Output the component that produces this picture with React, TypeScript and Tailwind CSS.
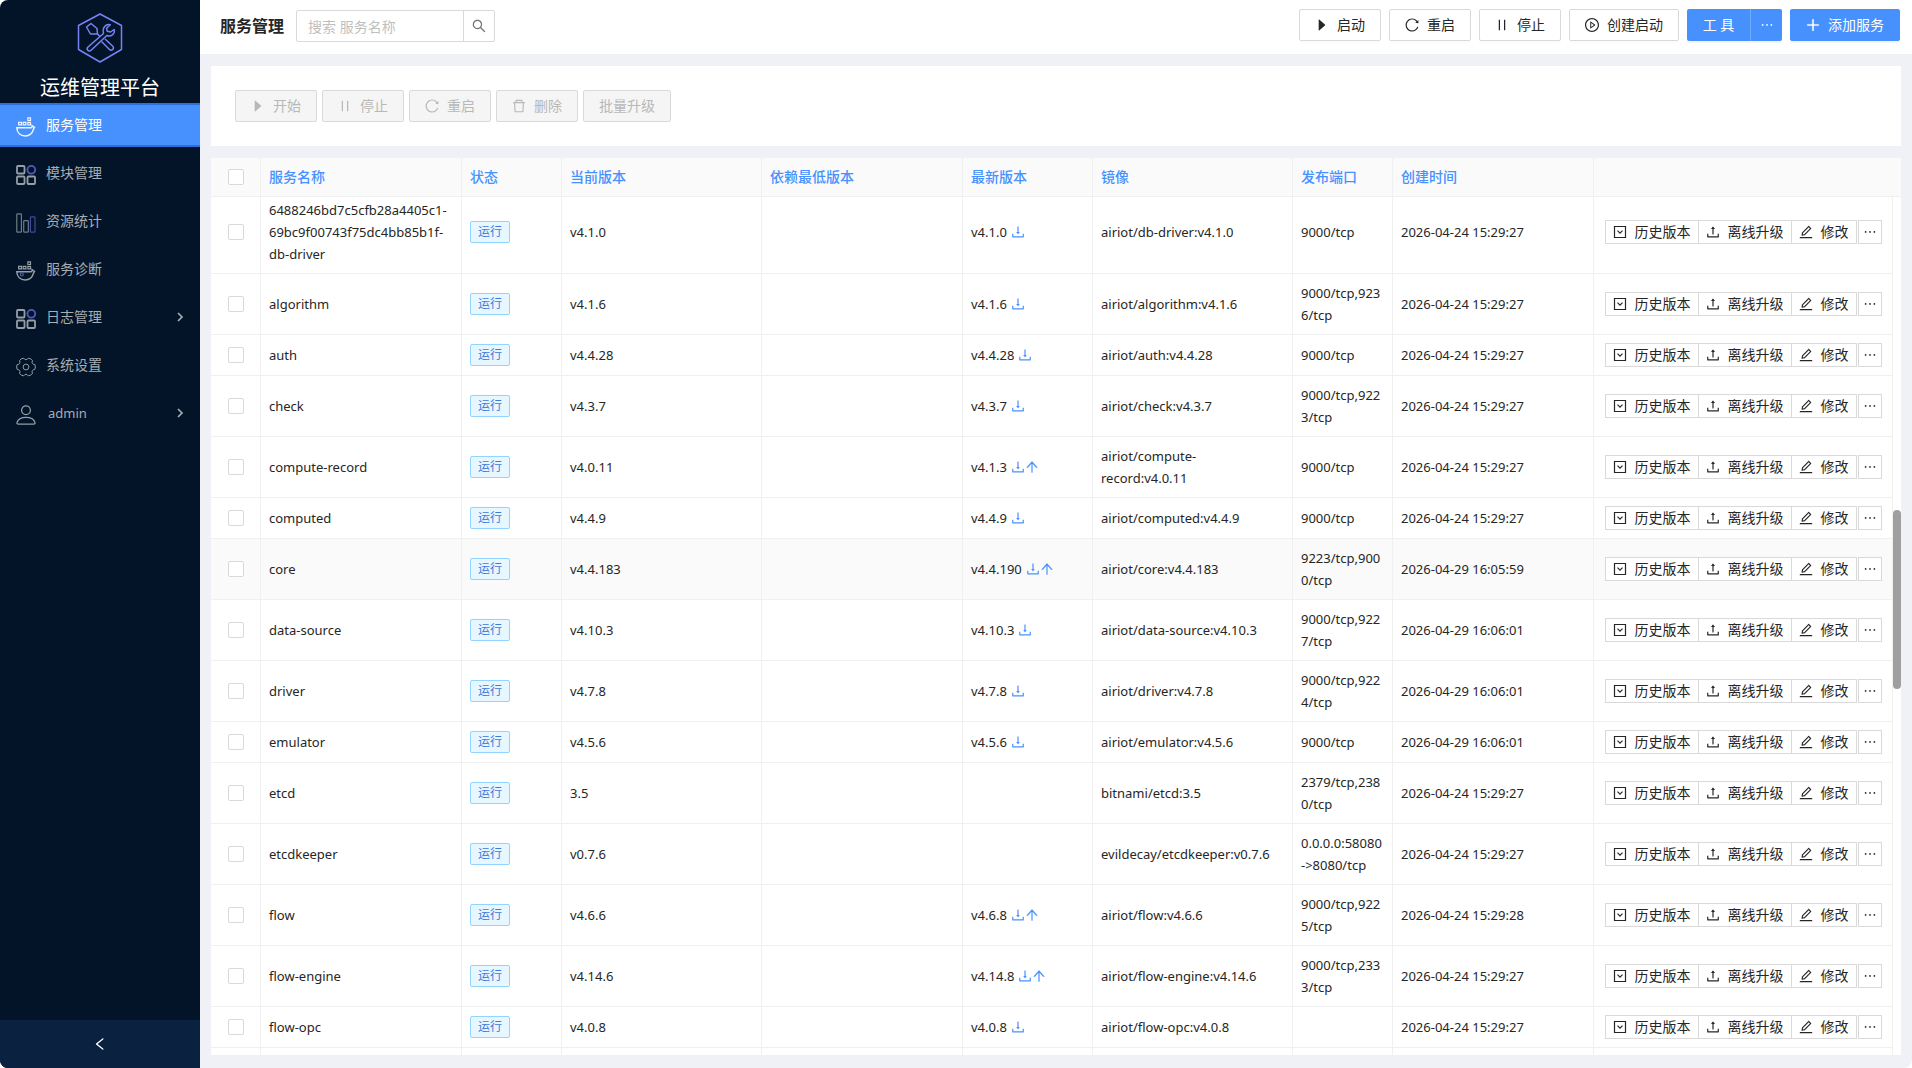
import React from 'react';
import {
  AiFillCaretRight,
  AiOutlineArrowUp,
  AiOutlineDelete,
  AiOutlineDownload,
  AiOutlineEdit,
  AiOutlineEllipsis,
  AiOutlineLeft,
  AiOutlinePause,
  AiOutlinePlayCircle,
  AiOutlinePlus,
  AiOutlineReload,
  AiOutlineSearch,
  AiOutlineUpload,
} from 'react-icons/ai';

type Service = {
  name: string;
  version: string;
  latest?: string;
  upgradable?: boolean;
  image: string;
  ports: string;
  created: string;
  hovered?: boolean;
};

const services: Service[] = [
  { name: '6488246bd7c5cfb28a4405c1-69bc9f00743f75dc4bb85b1f-db-driver', version: 'v4.1.0', latest: 'v4.1.0', image: 'airiot/db-driver:v4.1.0', ports: '9000/tcp', created: '2026-04-24 15:29:27' },
  { name: 'algorithm', version: 'v4.1.6', latest: 'v4.1.6', image: 'airiot/algorithm:v4.1.6', ports: '9000/tcp,9236/tcp', created: '2026-04-24 15:29:27' },
  { name: 'auth', version: 'v4.4.28', latest: 'v4.4.28', image: 'airiot/auth:v4.4.28', ports: '9000/tcp', created: '2026-04-24 15:29:27' },
  { name: 'check', version: 'v4.3.7', latest: 'v4.3.7', image: 'airiot/check:v4.3.7', ports: '9000/tcp,9223/tcp', created: '2026-04-24 15:29:27' },
  { name: 'compute-record', version: 'v4.0.11', latest: 'v4.1.3', upgradable: true, image: 'airiot/compute-record:v4.0.11', ports: '9000/tcp', created: '2026-04-24 15:29:27' },
  { name: 'computed', version: 'v4.4.9', latest: 'v4.4.9', image: 'airiot/computed:v4.4.9', ports: '9000/tcp', created: '2026-04-24 15:29:27' },
  { name: 'core', version: 'v4.4.183', latest: 'v4.4.190', upgradable: true, image: 'airiot/core:v4.4.183', ports: '9223/tcp,9000/tcp', created: '2026-04-29 16:05:59', hovered: true },
  { name: 'data-source', version: 'v4.10.3', latest: 'v4.10.3', image: 'airiot/data-source:v4.10.3', ports: '9000/tcp,9227/tcp', created: '2026-04-29 16:06:01' },
  { name: 'driver', version: 'v4.7.8', latest: 'v4.7.8', image: 'airiot/driver:v4.7.8', ports: '9000/tcp,9224/tcp', created: '2026-04-29 16:06:01' },
  { name: 'emulator', version: 'v4.5.6', latest: 'v4.5.6', image: 'airiot/emulator:v4.5.6', ports: '9000/tcp', created: '2026-04-29 16:06:01' },
  { name: 'etcd', version: '3.5', image: 'bitnami/etcd:3.5', ports: '2379/tcp,2380/tcp', created: '2026-04-24 15:29:27' },
  { name: 'etcdkeeper', version: 'v0.7.6', image: 'evildecay/etcdkeeper:v0.7.6', ports: '0.0.0.0:58080->8080/tcp', created: '2026-04-24 15:29:27' },
  { name: 'flow', version: 'v4.6.6', latest: 'v4.6.8', upgradable: true, image: 'airiot/flow:v4.6.6', ports: '9000/tcp,9225/tcp', created: '2026-04-24 15:29:28' },
  { name: 'flow-engine', version: 'v4.14.6', latest: 'v4.14.8', upgradable: true, image: 'airiot/flow-engine:v4.14.6', ports: '9000/tcp,2333/tcp', created: '2026-04-24 15:29:27' },
  { name: 'flow-opc', version: 'v4.0.8', latest: 'v4.0.8', image: 'airiot/flow-opc:v4.0.8', ports: '', created: '2026-04-24 15:29:27' },
];

function LogoIcon() {
  return (
    <svg viewBox="0 0 46 50" className="h-[50px] w-[46px]" fill="none" stroke="#7583f5" strokeWidth="1.5" strokeLinejoin="round">
      <path d="M23 1 44.5 12.5V36.5L23 49 1.5 36.5V12.5Z" />
      <path d="M9.500 14 14 10.500 20 15.500 20.500 21 13.500 21Z" />
      <path d="M20.500 21 23 23.500M24.500 28.500 32.500 36.500c1 1 2.800.8 3.500-.2s.6-2.200-.2-3L28 26" />
      <path d="M26.500 20.500 11 34c-1 1-1 2.400-.2 3.300s2.300.9 3.300-.1L29.800 22.500c2.500.9 5 .4 6.500-1.400 1.100-1.300 1.400-3 .9-4.600L33.500 19l-3.300-.8-.6-3 3.700-3.400c-2-.6-4.200 0-5.600 1.700-1.500 1.800-1.900 4.300-1.200 7Z" />
    </svg>
  );
}

function DockerIcon({ dot = false }: { dot?: boolean }) {
  return (
    <svg viewBox="0 0 20 20" className="size-5" fill="none" stroke="currentColor" strokeWidth="1.2">
      <path d="M2.600 5.400h2.800v2.400H2.600zM7.100 5.400h2.800v2.400H7.100zM11.900 5.400h2.600v2.400h-2.600zM11.900.9h2.600v2.600h-2.600z" />
      <path d="M.8 10.700h14.400c.8 0 .9-1 .9-2l2.400 1.700c-.6.900-1 1.500-1.300 2.500-1 3.600-3.900 6-8 6-4.700 0-8.200-2.900-8.400-8.200Z" strokeWidth="1.5" />
      {dot && <circle cx="5.8" cy="13.500" r="1.5" stroke="#5b63c9" />}
    </svg>
  );
}

function ModulesIcon() {
  return (
    <svg viewBox="0 0 20 20" className="size-5" fill="none" stroke="currentColor" strokeWidth="1.8">
      <rect x="1" y="1" width="7.5" height="7.5" rx="1" />
      <rect x="1" y="11.5" width="7.5" height="7.5" rx="1" />
      <rect x="11.5" y="11.5" width="7.5" height="7.5" rx="1" />
      <circle cx="15.3" cy="4.8" r="3.9" stroke="#5b63c9" />
    </svg>
  );
}

function BarsIcon() {
  return (
    <svg viewBox="0 0 20 20" className="size-5" fill="none" stroke="currentColor" strokeWidth="1.2">
      <rect x=".8" y=".8" width="4.6" height="18.4" rx=".8" opacity=".75" />
      <rect x="7.700" y="7.6" width="4.6" height="11.6" rx=".8" opacity=".75" />
      <rect x="14.4" y="3.8" width="4.6" height="15.4" rx=".8" stroke="#4650a8" />
    </svg>
  );
}

function gearPath() {
  const at = (angle: number, radius: number) => {
    const rad = (angle * Math.PI) / 180;
    return `${(10 + radius * Math.cos(rad)).toFixed(2)} ${(10 + radius * Math.sin(rad)).toFixed(2)}`;
  };
  const lobes = [0, 60, 120, 180, 240, 300].map(
    (a) => `${a === 0 ? 'M' : 'L'}${at(a - 15, 9.2)}Q${at(a, 9.8)} ${at(a + 15, 9.2)}Q${at(a + 30, 5.6)} ${at(a + 45, 9.2)}`,
  );
  return `${lobes.join('')}Z`;
}

function GearIcon() {
  return (
    <svg viewBox="0 0 20 20" className="size-5" fill="none" stroke="currentColor" strokeWidth="1" strokeLinejoin="round">
      <path d={gearPath()} />
      <circle cx="10" cy="10" r="2.900" />
    </svg>
  );
}

function UserIcon() {
  return (
    <svg viewBox="0 0 20 20" className="size-5" fill="none" stroke="currentColor" strokeWidth="1.3">
      <circle cx="10" cy="5.2" r="4.4" />
      <path d="M2.200 19.200c-.9 0-1.400-.7-1.200-1.600.8-3.300 4.200-5.300 9-5.300s8.200 2 9 5.300c.2.900-.3 1.600-1.200 1.600Z" />
    </svg>
  );
}

function ChevronIcon() {
  return (
    <svg viewBox="0 0 8 10" className="h-2.5 w-2" fill="none" stroke="currentColor" strokeWidth="1.7">
      <path d="M2 1l4 4-4 4" />
    </svg>
  );
}

function HistoryIcon() {
  return (
    <svg viewBox="0 0 14 14" className="size-3.5" fill="none" stroke="currentColor" strokeWidth="1.2">
      <path d="M1.500 1.500h11v11h-11z" />
      <path d="M4.500 5.700 7 8.200l2.500-2.500" />
    </svg>
  );
}

const menu = [
  { label: '服务管理', icon: <DockerIcon />, active: true },
  { label: '模块管理', icon: <ModulesIcon /> },
  { label: '资源统计', icon: <BarsIcon /> },
  { label: '服务诊断', icon: <DockerIcon dot /> },
  { label: '日志管理', icon: <ModulesIcon />, expandable: true },
  { label: '系统设置', icon: <GearIcon /> },
  { label: 'admin', icon: <UserIcon />, expandable: true },
];

function Sidebar() {
  return (
    <aside className="flex w-[200px] shrink-0 flex-col bg-[#031428]">
      <div className="flex h-[103px] flex-col items-center pt-[13px]">
        <LogoIcon />
        <h1 className="mt-2.5 text-xl leading-[30px] text-white">运维管理平台</h1>
      </div>
      <nav className="flex flex-col gap-1">
        {menu.map((item) => (
          <a
            key={item.label}
            href="#"
            className={
              item.active
                ? 'flex h-11 items-center border-y-2 border-[#2f6fdb] bg-[#4791ff] px-4 text-white'
                : 'flex h-11 items-center px-4 text-[#a6adb4]'
            }
          >
            <span className="mt-1 opacity-90">{item.icon}</span>
            <span className="ml-2.5 flex-1">{item.label === 'admin' ? <span className="ml-0.5 text-[13px]">admin</span> : item.label}</span>
            {item.expandable && <ChevronIcon />}
          </a>
        ))}
      </nav>
      <button type="button" aria-label="收起菜单" className="mt-auto flex h-12 items-center justify-center bg-[#0b2140] text-white">
        <AiOutlineLeft className="size-4" />
      </button>
    </aside>
  );
}

function HeaderButton({ icon, children, primary = false }: { icon: React.ReactNode; children: React.ReactNode; primary?: boolean }) {
  return (
    <button
      type="button"
      className={
        primary
          ? 'flex h-8 items-center gap-[7px] rounded-xs border border-[#4791ff] bg-[#4791ff] px-3.5 pr-[15px] text-white shadow-[0_2px_0_rgba(0,0,0,0.045)]'
          : 'flex h-8 items-center gap-[7px] rounded-xs border border-[#d9d9d9] bg-white pr-[15px] pl-3.5 shadow-[0_2px_0_rgba(0,0,0,0.016)]'
      }
    >
      {icon}
      <span>{children}</span>
    </button>
  );
}

function Header() {
  return (
    <header className="flex h-[54px] shrink-0 items-center justify-between bg-white pr-3 pl-5">
      <div className="mb-0.5 flex items-center">
        <h2 className="w-[76px] text-base font-bold whitespace-nowrap">服务管理</h2>
        <input
          type="text"
          aria-label="搜索服务名称"
          placeholder="搜索 服务名称"
          className="h-8 w-[168px] rounded-l-xs border border-[#d9d9d9] px-[11px] outline-none placeholder:text-[#bfbfbf]"
        />
        <button type="button" aria-label="搜索" className="-ml-px flex size-8 items-center justify-center rounded-r-xs border border-[#d9d9d9] text-[#737373]">
          <AiOutlineSearch className="size-4" />
        </button>
      </div>
      <div className="mb-1 flex gap-2">
        <HeaderButton icon={<AiFillCaretRight className="size-4" />}>启动</HeaderButton>
        <HeaderButton icon={<AiOutlineReload className="size-4" />}>重启</HeaderButton>
        <HeaderButton icon={<AiOutlinePause className="size-4" />}>停止</HeaderButton>
        <HeaderButton icon={<AiOutlinePlayCircle className="size-4" />}>创建启动</HeaderButton>
        <div className="flex text-white shadow-[0_2px_0_rgba(0,0,0,0.045)]">
          <button type="button" className="h-8 w-16 rounded-l-xs border-r border-[#70acff] bg-[#4791ff]">工 具</button>
          <button type="button" aria-label="更多工具" className="flex h-8 w-[31px] items-center justify-center rounded-r-xs bg-[#4791ff]">
            <AiOutlineEllipsis className="size-4" />
          </button>
        </div>
        <HeaderButton primary icon={<AiOutlinePlus className="size-4 stroke-[30]" />}>添加服务</HeaderButton>
      </div>
    </header>
  );
}

const batchActions = [
  { label: '开始', icon: <AiFillCaretRight className="-m-px size-4" /> },
  { label: '停止', icon: <AiOutlinePause className="-m-px size-4" /> },
  { label: '重启', icon: <AiOutlineReload className="-m-px size-4" /> },
  { label: '删除', icon: <AiOutlineDelete className="-m-px size-4" /> },
  { label: '批量升级', icon: null },
];

function BatchBar() {
  return (
    <section className="flex h-20 shrink-0 items-center gap-[5px] bg-white px-6">
      {batchActions.map((action) => (
        <button
          key={action.label}
          type="button"
          disabled
          className="flex h-8 items-center gap-2 rounded-xs border border-[#d9d9d9] bg-[#f5f5f5] px-[15px] text-[#b8b8b8]"
        >
          {action.icon}
          <span>{action.label}</span>
        </button>
      ))}
    </section>
  );
}

function Columns() {
  return (
    <colgroup>
      <col className="w-[50px]" />
      <col className="w-[201px]" />
      <col className="w-[100px]" />
      <col className="w-[200px]" />
      <col className="w-[201px]" />
      <col className="w-[130px]" />
      <col className="w-[200px]" />
      <col className="w-[100px]" />
      <col className="w-[201px]" />
      <col />
    </colgroup>
  );
}

const check = 'block mx-auto size-4 appearance-none rounded-xs border border-[#d9d9d9] bg-white';
const cell = 'border-r border-b border-[#f0f0f0] p-2';
const rowButton = 'relative -ml-px flex h-6 items-center gap-2 border border-[#d9d9d9] bg-white px-[7px] whitespace-nowrap';

function ServiceRow({ service }: { service: Service }) {
  return (
    <tr className={service.hovered ? 'bg-[#fafafa]' : 'bg-white'}>
      <td className={cell}>
        <input type="checkbox" aria-label={service.name} className={check} />
      </td>
      <td className={cell}>{service.name}</td>
      <td className={cell}>
        <span className="block w-10 rounded-xs border border-[#91d5ff] bg-[#e6f7ff] text-center text-xs leading-5 text-[#3f78dc]">运行</span>
      </td>
      <td className={cell}>{service.version}</td>
      <td className={cell} />
      <td className={cell}>
        {service.latest && (
          <span className="flex items-center">
            <span className="mr-1">{service.latest}</span>
            <button type="button" aria-label="下载" className="text-[#4791ff]">
              <AiOutlineDownload className="-m-px size-4" />
            </button>
            {service.upgradable && (
              <button type="button" aria-label="升级" className="text-[#4791ff]">
                <AiOutlineArrowUp className="-m-px size-4" />
              </button>
            )}
          </span>
        )}
      </td>
      <td className="border-r border-b border-[#f0f0f0] py-2 pr-3 pl-2">{service.image}</td>
      <td className="border-r border-b border-[#f0f0f0] p-2 break-all">{service.ports}</td>
      <td className={cell}>{service.created}</td>
      <td className={cell}>
        <div className="flex justify-center pl-px text-sm leading-[22px]">
          <button type="button" className={rowButton}>
            <HistoryIcon />
            历史版本
          </button>
          <button type="button" className={rowButton}>
            <AiOutlineUpload className="-m-px size-4" />
            离线升级
          </button>
          <button type="button" className={rowButton}>
            <AiOutlineEdit className="-m-px size-4" />
            修改
          </button>
          <button type="button" aria-label="更多" className="ml-px flex size-6 items-center justify-center border border-[#d9d9d9] bg-white">
            <AiOutlineEllipsis className="size-4" />
          </button>
        </div>
      </td>
    </tr>
  );
}

const headings = ['服务名称', '状态', '当前版本', '依赖最低版本', '最新版本', '镜像', '发布端口', '创建时间', ''];

function ServiceTable() {
  return (
    <section className="flex min-h-0 flex-1 flex-col bg-white">
      <div className="flex shrink-0 border-b border-[#f0f0f0] bg-[#fafafa] pr-2">
        <table className="w-full table-fixed border-separate border-spacing-0">
          <Columns />
          <thead>
            <tr>
              <th className="h-[38px] border-r border-[#f0f0f0] p-2">
                <input type="checkbox" aria-label="全选" className={check} />
              </th>
              {headings.map((heading) => (
                <th key={heading} className="h-[38px] border-r border-[#f0f0f0] px-2 py-0 text-left font-medium text-[#4791ff] last:border-r-0">
                  {heading}
                </th>
              ))}
            </tr>
          </thead>
        </table>
      </div>
      <div className="flex min-h-0 flex-1 overflow-hidden">
        <div className="min-w-0 flex-1 overflow-hidden">
          <table className="-mt-1.5 w-full table-fixed border-separate border-spacing-0 text-[13px] leading-[22px]">
            <Columns />
            <tbody>
              {services.map((service) => (
                <ServiceRow key={service.name} service={service} />
              ))}
              <tr>
                {services.slice(0, 10).map((service) => (
                  <td key={service.name} className="h-6 border-r border-[#f0f0f0]" />
                ))}
              </tr>
            </tbody>
          </table>
        </div>
        <div className="flex w-2 shrink-0 flex-col">
          <div className="mt-[313px] h-[179px] rounded-full bg-[#9f9f9f]" />
        </div>
      </div>
    </section>
  );
}

export default function App() {
  return (
    <div className="flex h-screen overflow-hidden rounded-lg bg-[#f0f1f6] font-['Noto_Sans','Noto_Sans_CJK_SC',sans-serif] text-sm leading-[22px] text-[#262626]">
      <Sidebar />
      <div className="flex min-w-0 flex-1 flex-col">
        <Header />
        <main className="flex min-h-0 flex-1 flex-col gap-3 pt-3 pr-[11px] pb-[13px] pl-[11px]">
          <BatchBar />
          <ServiceTable />
        </main>
      </div>
    </div>
  );
}
